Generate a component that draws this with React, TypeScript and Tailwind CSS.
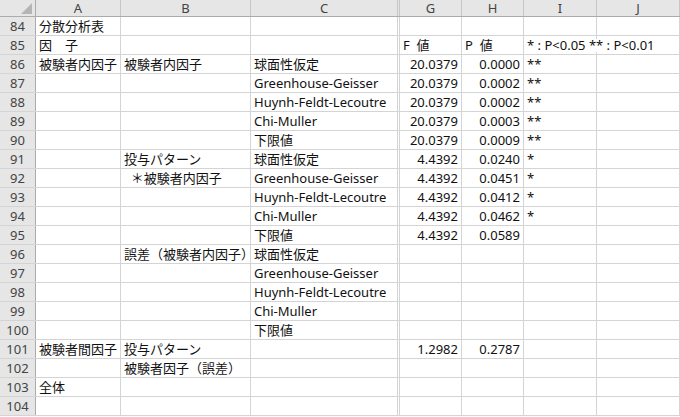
const cols = ["A", "B", "C", "G", "H", "I", "J"];
const widths = "grid-cols-[36px_85px_130px_149px_62px_62px_73px_83px]";

type Row = [number, string, string, string, string, string, string, string];
const rows: Row[] = [
  [84, "分散分析表", "", "", "", "", "", ""],
  [85, "因　子", "", "", "F  値", "P  値", "* : P<0.05 ** : P<0.01", ""],
  [86, "被験者内因子", "被験者内因子", "球面性仮定", "20.0379", "0.0000", "**", ""],
  [87, "", "", "Greenhouse-Geisser", "20.0379", "0.0002", "**", ""],
  [88, "", "", "Huynh-Feldt-Lecoutre", "20.0379", "0.0002", "**", ""],
  [89, "", "", "Chi-Muller", "20.0379", "0.0003", "**", ""],
  [90, "", "", "下限値", "20.0379", "0.0009", "**", ""],
  [91, "", "投与パターン", "球面性仮定", "4.4392", "0.0240", "*", ""],
  [92, "", "  ＊被験者内因子", "Greenhouse-Geisser", "4.4392", "0.0451", "*", ""],
  [93, "", "", "Huynh-Feldt-Lecoutre", "4.4392", "0.0412", "*", ""],
  [94, "", "", "Chi-Muller", "4.4392", "0.0462", "*", ""],
  [95, "", "", "下限値", "4.4392", "0.0589", "", ""],
  [96, "", "誤差（被験者内因子）", "球面性仮定", "", "", "", ""],
  [97, "", "", "Greenhouse-Geisser", "", "", "", ""],
  [98, "", "", "Huynh-Feldt-Lecoutre", "", "", "", ""],
  [99, "", "", "Chi-Muller", "", "", "", ""],
  [100, "", "", "下限値", "", "", "", ""],
  [101, "被験者間因子", "投与パターン", "", "1.2982", "0.2787", "", ""],
  [102, "", "被験者因子（誤差）", "", "", "", "", ""],
  [103, "全体", "", "", "", "", "", ""],
  [104, "", "", "", "", "", "", ""],
];

export default function App() {
  return (
    <div
      className="h-[417px] w-[680px] overflow-hidden bg-white text-[13px] text-[#111]"
      style={{ fontFamily: '"Noto Sans", "Noto Sans CJK JP", sans-serif' }}
    >
      {/* 列見出し */}
      <div className={`grid h-[17px] ${widths} border-b border-[#ababab] bg-[#e6e6e6] text-[#444]`}>
        <div className="relative border-r border-[#ababab]">
          <svg className="absolute bottom-[2px] right-[3px]" width="11" height="11" viewBox="0 0 11 11">
            <path d="M11 0V11H0Z" fill="#b5b5b5" />
          </svg>
        </div>
        {cols.map((c) => (
          <div
            key={c}
            className={`flex items-center justify-center border-r border-[#c6c6c6] leading-none ${
              c === "C" ? "border-r-[3px] border-double" : ""
            }`}
          >
            {c}
          </div>
        ))}
      </div>
      {rows.map((r) => (
        <div key={r[0]} className={`grid h-[19px] ${widths} border-b border-[#d4d4d4]`}>
          <div className="flex items-center justify-center border-r border-[#ababab] bg-[#e6e6e6] text-[#444] leading-none">
            {r[0]}
          </div>
          {r.slice(1).map((v, i) => {
            const num = (i === 3 || i === 4) && /^\d/.test(v);
            return (
              <div
                key={i}
                className={`flex items-center overflow-visible whitespace-pre border-r border-[#d4d4d4] px-[3px] leading-none ${
                  num ? "justify-end" : ""
                } ${i === 2 ? "border-r-[3px] border-double" : ""} ${v.length > 14 && i === 5 ? "relative z-10" : ""}`}
              >
                <span className={i === 5 && v.length > 3 ? "bg-white" : ""}>{v}</span>
              </div>
            );
          })}
        </div>
      ))}
    </div>
  );
}
